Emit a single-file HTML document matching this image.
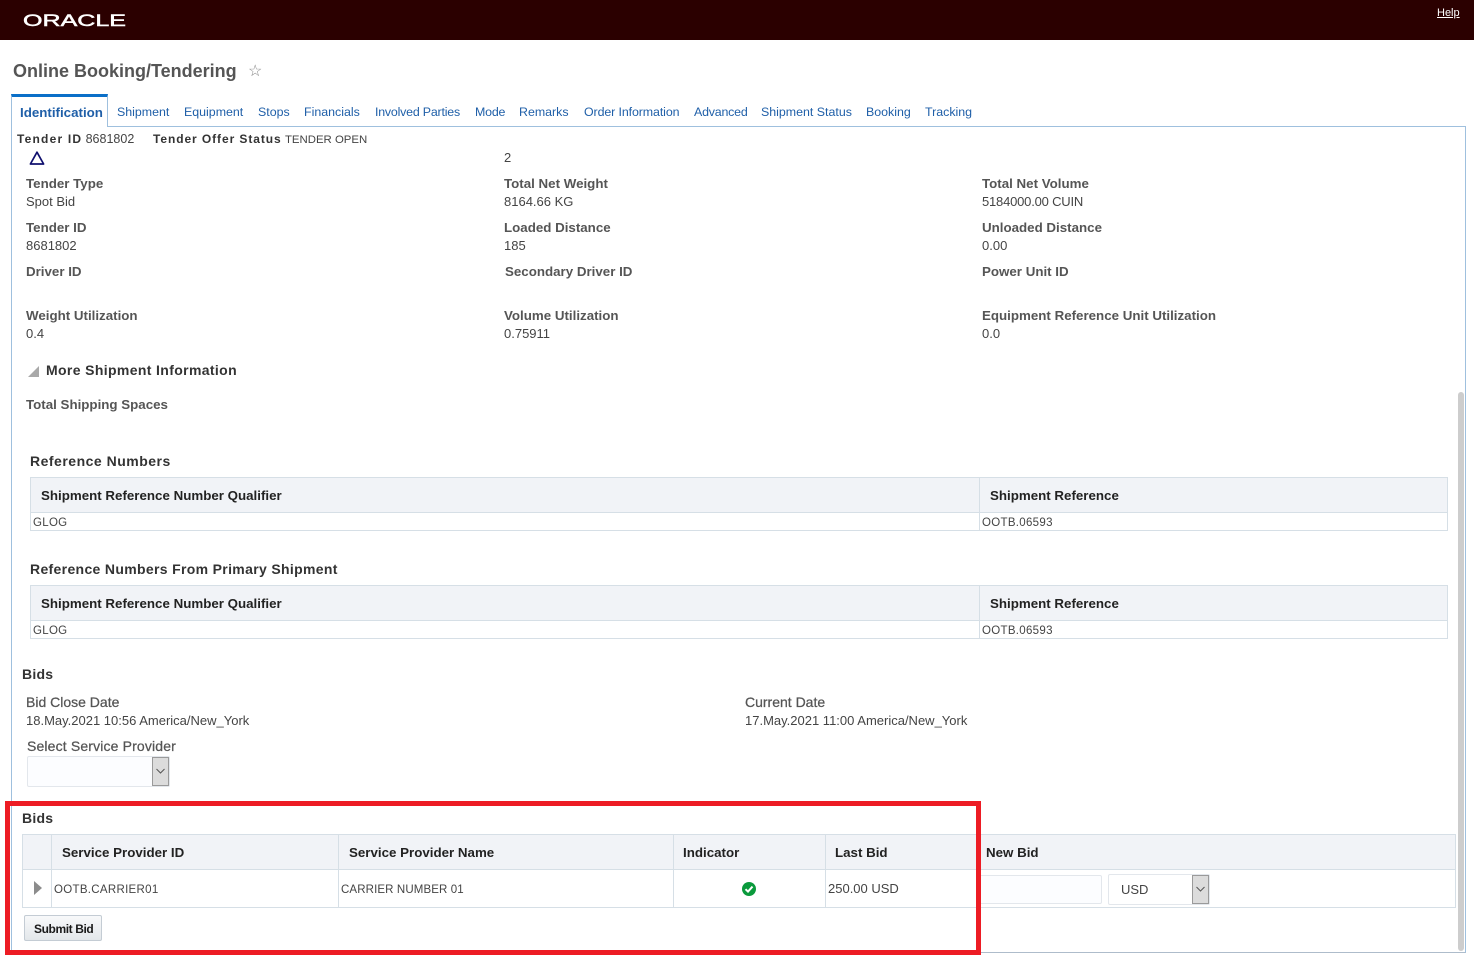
<!DOCTYPE html>
<html lang="en">
<head>
<meta charset="utf-8">
<title>Online Booking/Tendering</title>
<style>
html,body{margin:0;padding:0;background:#fff;width:1474px;height:971px;overflow:hidden}
body{position:relative;font-family:"Liberation Sans",Arial,sans-serif;font-size:13px;color:#444}
.t{position:absolute;white-space:nowrap;line-height:18px}
.b{position:absolute}
.l{font-weight:bold;color:#555;font-size:13.33px;margin-top:1px}
.n{font-weight:normal;font-size:14px;-webkit-text-stroke:.25px #555;margin-top:0}
.v{color:#444;font-size:13px;margin-top:1px}
.tab{color:#1f5fa8;font-size:12.4px;top:103px}
.h{font-weight:bold;color:#333;font-size:14px}
.th{font-weight:bold;color:#222;font-size:13.33px;margin-top:1px}
.s{font-size:11.5px;color:#444;letter-spacing:.3px}
.line{position:absolute;background:#d6dfe6}
.head{position:absolute;background:#f1f3f7}
</style>
</head>
<body>
<div class="b" style="left:0;top:0;width:1474px;height:40px;background:#2b0000"></div>
<svg class="b" style="left:20px;top:8px" width="112" height="24"><text x="3" y="18" font-family="Liberation Sans" font-size="17" fill="#fff" stroke="#fff" stroke-width=".5" textLength="103" lengthAdjust="spacingAndGlyphs">ORACLE</text></svg>
<a class="t" style="left:1437px;top:4px;font-size:11px;color:#fff;text-decoration:underline">Help</a>

<div class="t" style="left:13px;top:60px;font-size:18px;line-height:22px;font-weight:bold;color:#555">Online Booking/Tendering</div>
<div class="t" style="left:248px;top:63px;font-size:16px;color:#888">☆</div>

<!-- content frame -->
<div class="b" style="left:11px;top:126px;width:1455px;height:827px;border:1px solid #9fc0de;border-bottom-color:#aebccb;box-sizing:border-box"></div>
<div class="b" style="left:11px;top:94px;width:97px;height:33px;background:#fff;border:1px solid #9fc0de;border-top:3px solid #0a6fc8;border-bottom:0;box-sizing:border-box"></div>

<div class="t" style="left:20px;top:104px;font-size:13.33px;font-weight:bold;color:#1f5fa8">Identification</div>
<div class="t tab" style="left:117px">Shipment</div>
<div class="t tab" style="left:184px">Equipment</div>
<div class="t tab" style="left:258px">Stops</div>
<div class="t tab" style="left:304px">Financials</div>
<div class="t tab" style="left:375px;letter-spacing:-.2px">Involved Parties</div>
<div class="t tab" style="left:475px;letter-spacing:-.2px">Mode</div>
<div class="t tab" style="left:519px">Remarks</div>
<div class="t tab" style="left:584px;letter-spacing:-.1px">Order Information</div>
<div class="t tab" style="left:694px;letter-spacing:-.2px">Advanced</div>
<div class="t tab" style="left:761px">Shipment Status</div>
<div class="t tab" style="left:866px">Booking</div>
<div class="t tab" style="left:925px">Tracking</div>

<div class="t" style="left:17px;top:130px;font-size:12px;color:#444"><b style="color:#333;letter-spacing:1.2px">Tender ID</b> <span style="font-size:12.5px">8681802</span></div>
<div class="t" style="left:153px;top:130px;font-size:12px;color:#444"><b style="color:#333;letter-spacing:.92px">Tender Offer Status</b> <span style="font-size:11.4px">TENDER OPEN</span></div>

<svg class="b" style="left:28px;top:150px" width="18" height="16"><path d="M9 2.2 L15.6 14 L2.4 14 Z" fill="none" stroke="#10106e" stroke-width="1.7" stroke-linejoin="round"/></svg>
<div class="t v" style="left:504px;top:148px">2</div>

<div class="t l" style="left:26px;top:174px">Tender Type</div>
<div class="t v" style="left:26px;top:192px">Spot Bid</div>
<div class="t l" style="left:504px;top:174px">Total Net Weight</div>
<div class="t v" style="left:504px;top:192px">8164.66 KG</div>
<div class="t l" style="left:982px;top:174px">Total Net Volume</div>
<div class="t v" style="left:982px;top:192px;letter-spacing:-.2px">5184000.00 CUIN</div>

<div class="t l" style="left:26px;top:218px">Tender ID</div>
<div class="t v" style="left:26px;top:236px">8681802</div>
<div class="t l" style="left:504px;top:218px">Loaded Distance</div>
<div class="t v" style="left:504px;top:236px">185</div>
<div class="t l" style="left:982px;top:218px">Unloaded Distance</div>
<div class="t v" style="left:982px;top:236px">0.00</div>

<div class="t l" style="left:26px;top:262px">Driver ID</div>
<div class="t l" style="left:505px;top:262px">Secondary Driver ID</div>
<div class="t l" style="left:982px;top:262px">Power Unit ID</div>

<div class="t l" style="left:26px;top:306px">Weight Utilization</div>
<div class="t v" style="left:26px;top:324px">0.4</div>
<div class="t l" style="left:504px;top:306px">Volume Utilization</div>
<div class="t v" style="left:504px;top:324px">0.75911</div>
<div class="t l" style="left:982px;top:306px">Equipment Reference Unit Utilization</div>
<div class="t v" style="left:982px;top:324px">0.0</div>

<svg class="b" style="left:28px;top:365px" width="12" height="12"><path d="M11 1 V12 H0 Z" fill="#a9a9a9"/></svg>
<div class="t h" style="left:46px;top:361px;letter-spacing:.36px">More Shipment Information</div>
<div class="t l" style="left:26px;top:395px">Total Shipping Spaces</div>

<!-- Reference Numbers -->
<div class="t h" style="left:30px;top:452px;letter-spacing:.5px">Reference Numbers</div>
<div class="head" style="left:30px;top:477px;width:1418px;height:35px"></div>
<div class="line" style="left:30px;top:477px;width:1418px;height:1px"></div>
<div class="line" style="left:30px;top:512px;width:1418px;height:1px"></div>
<div class="line" style="left:30px;top:530px;width:1418px;height:1px"></div>
<div class="line" style="left:30px;top:477px;width:1px;height:54px"></div>
<div class="line" style="left:979px;top:477px;width:1px;height:54px"></div>
<div class="line" style="left:1447px;top:477px;width:1px;height:54px"></div>
<div class="t th" style="left:41px;top:486px">Shipment Reference Number Qualifier</div>
<div class="t th" style="left:990px;top:486px">Shipment Reference</div>
<div class="t s" style="left:33px;top:514px">GLOG</div>
<div class="t s" style="left:982px;top:514px">OOTB.06593</div>

<!-- Primary -->
<div class="t h" style="left:30px;top:560px;letter-spacing:.33px">Reference Numbers From Primary Shipment</div>
<div class="head" style="left:30px;top:585px;width:1418px;height:35px"></div>
<div class="line" style="left:30px;top:585px;width:1418px;height:1px"></div>
<div class="line" style="left:30px;top:620px;width:1418px;height:1px"></div>
<div class="line" style="left:30px;top:638px;width:1418px;height:1px"></div>
<div class="line" style="left:30px;top:585px;width:1px;height:54px"></div>
<div class="line" style="left:979px;top:585px;width:1px;height:54px"></div>
<div class="line" style="left:1447px;top:585px;width:1px;height:54px"></div>
<div class="t th" style="left:41px;top:594px">Shipment Reference Number Qualifier</div>
<div class="t th" style="left:990px;top:594px">Shipment Reference</div>
<div class="t s" style="left:33px;top:622px">GLOG</div>
<div class="t s" style="left:982px;top:622px">OOTB.06593</div>

<!-- Bids top -->
<div class="t h" style="left:22px;top:665px;letter-spacing:.25px">Bids</div>
<div class="t l n" style="left:26px;top:693px">Bid Close Date</div>
<div class="t v" style="left:26px;top:711px">18.May.2021 10:56 America/New_York</div>
<div class="t l n" style="left:745px;top:693px">Current Date</div>
<div class="t v" style="left:745px;top:711px">17.May.2021 11:00 America/New_York</div>
<div class="t l n" style="left:27px;top:737px;letter-spacing:.15px">Select Service Provider</div>

<div class="b" style="left:27px;top:756px;width:143px;height:31px;border:1px solid #e3e7ec;border-radius:2px;box-sizing:border-box;background:#fcfdff"></div>
<div class="b" style="left:152px;top:757px;width:17px;height:29px;background:#dcdcdc;border:1px solid #9a9a9a;box-sizing:border-box"></div>
<svg class="b" style="left:155px;top:767px" width="11" height="9"><path d="M1.5 2 L5.5 6 L9.5 2" fill="none" stroke="#555" stroke-width="1"/></svg>

<!-- Bids table -->
<div class="t h" style="left:22px;top:809px;letter-spacing:.25px">Bids</div>
<div class="head" style="left:22px;top:834px;width:1434px;height:35px"></div>
<div class="line" style="left:22px;top:834px;width:1434px;height:1px"></div>
<div class="line" style="left:22px;top:869px;width:1434px;height:1px"></div>
<div class="line" style="left:22px;top:907px;width:1434px;height:1px"></div>
<div class="line" style="left:22px;top:834px;width:1px;height:74px"></div>
<div class="line" style="left:51px;top:834px;width:1px;height:74px"></div>
<div class="line" style="left:338px;top:834px;width:1px;height:74px"></div>
<div class="line" style="left:673px;top:834px;width:1px;height:74px"></div>
<div class="line" style="left:825px;top:834px;width:1px;height:74px"></div>
<div class="line" style="left:1455px;top:834px;width:1px;height:74px"></div>

<div class="t th" style="left:62px;top:843px">Service Provider ID</div>
<div class="t th" style="left:349px;top:843px">Service Provider Name</div>
<div class="t th" style="left:683px;top:843px">Indicator</div>
<div class="t th" style="left:835px;top:843px">Last Bid</div>
<div class="t th" style="left:986px;top:843px">New Bid</div>

<svg class="b" style="left:33px;top:880px" width="10" height="16"><path d="M1 1 L9 8 L1 15 Z" fill="#8c8c8c"/></svg>
<div class="t s" style="left:54px;top:881px">OOTB.CARRIER01</div>
<div class="t s" style="left:341px;top:881px;letter-spacing:.12px">CARRIER NUMBER 01</div>
<svg class="b" style="left:741px;top:881px" width="16" height="16"><circle cx="8" cy="8" r="7" fill="#0a9a3c"/><path d="M4.5 8.2 L7 10.6 L11.5 5.6" fill="none" stroke="#fff" stroke-width="2"/></svg>
<div class="t v" style="left:828px;top:879px">250.00 USD</div>

<div class="b" style="left:978px;top:875px;width:124px;height:29px;border:1px solid #e3e7ec;border-radius:2px;box-sizing:border-box;background:#fcfdff"></div>
<div class="b" style="left:1108px;top:874px;width:102px;height:31px;border:1px solid #e3e7ec;border-radius:2px;box-sizing:border-box;background:#fff"></div>
<div class="t v" style="left:1121px;top:880px">USD</div>
<div class="b" style="left:1192px;top:875px;width:17px;height:29px;background:#dcdcdc;border:1px solid #9a9a9a;box-sizing:border-box"></div>
<svg class="b" style="left:1195px;top:885px" width="11" height="9"><path d="M1.5 2 L5.5 6 L9.5 2" fill="none" stroke="#555" stroke-width="1"/></svg>

<div class="b" style="left:24px;top:915px;width:78px;height:26px;box-sizing:border-box;border:1px solid #c4ccd4;border-radius:2px;background:linear-gradient(#f8f9fa,#e3e7ea)"></div>
<div class="t" style="left:34px;top:920px;font-size:12px;letter-spacing:-.4px;font-weight:bold;color:#1a1a1a">Submit Bid</div>

<!-- scrollbar -->
<div class="b" style="left:1458px;top:392px;width:6px;height:559px;background:#cdcdcd;border-radius:3px"></div>

<!-- red annotation -->
<div class="b" style="left:5px;top:801px;width:976px;height:154px;border:5px solid #ed1c24;box-sizing:border-box"></div>
</body>
</html>
